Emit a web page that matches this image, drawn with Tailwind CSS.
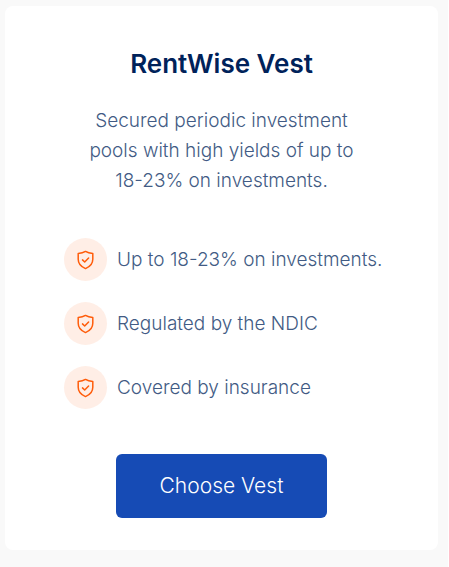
<!DOCTYPE html>
<html lang="en">
<head>
<meta charset="utf-8">
<meta name="viewport" content="width=device-width, initial-scale=1">
<title>RentWise Vest</title>
<script src="https://cdn.jsdelivr.net/npm/@tailwindcss/browser@4"></script>
</head>
<body class="min-h-screen border-r border-white bg-[#f9f9f9] pt-[6px] pr-[10px] pb-[17px] pl-[5px] font-['Inter','Liberation_Sans',sans-serif] text-[#425b84]">
<svg class="hidden" aria-hidden="true">
  <symbol id="shield" viewBox="0 0 20 20">
    <path d="M9.5 1.4 C7.3 2.8 4.7 3.3 2.2 3.4 V9.3 C2.2 14 5.5 17 9.5 18.6 C13.5 17 16.8 14 16.8 9.3 V3.4 C14.3 3.3 11.7 2.8 9.5 1.4 Z"/>
    <path d="M6.5 9.9 L8.7 12 L12.6 8"/>
  </symbol>
</svg>
<main class="flex flex-col items-center rounded-lg bg-white pt-[42px] pb-8">
  <h1 class="text-[26px] leading-8 font-semibold text-[#00225a]">RentWise Vest</h1>
  <p class="mt-[26px] text-center text-[19px] leading-[30px] font-light">Secured periodic investment<br>pools with high yields of up to<br>18-23% on investments.</p>
  <ul class="mt-[42px] flex w-full flex-col gap-[21px] pl-[59px] text-[19px] leading-6 font-light">
    <li class="flex items-center gap-[10px]">
      <span class="flex size-[43px] shrink-0 items-center justify-center rounded-full bg-[#ffeee6]"><svg class="size-5 fill-none stroke-[#ff5c0a] stroke-[1.5]" stroke-linecap="round" stroke-linejoin="round" aria-hidden="true"><use href="#shield"/></svg></span>
      <span>Up to 18-23% on investments.</span>
    </li>
    <li class="flex items-center gap-[10px]">
      <span class="flex size-[43px] shrink-0 items-center justify-center rounded-full bg-[#ffeee6]"><svg class="size-5 fill-none stroke-[#ff5c0a] stroke-[1.5]" stroke-linecap="round" stroke-linejoin="round" aria-hidden="true"><use href="#shield"/></svg></span>
      <span>Regulated by the NDIC</span>
    </li>
    <li class="flex items-center gap-[10px]">
      <span class="flex size-[43px] shrink-0 items-center justify-center rounded-full bg-[#ffeee6]"><svg class="size-5 fill-none stroke-[#ff5c0a] stroke-[1.5]" stroke-linecap="round" stroke-linejoin="round" aria-hidden="true"><use href="#shield"/></svg></span>
      <span>Covered by insurance</span>
    </li>
  </ul>
  <button type="button" class="mt-[45px] rounded-md bg-[#164bb5] px-11 py-[18px] text-[21px] leading-7 font-light text-white">Choose Vest</button>
</main>
</body>
</html>
